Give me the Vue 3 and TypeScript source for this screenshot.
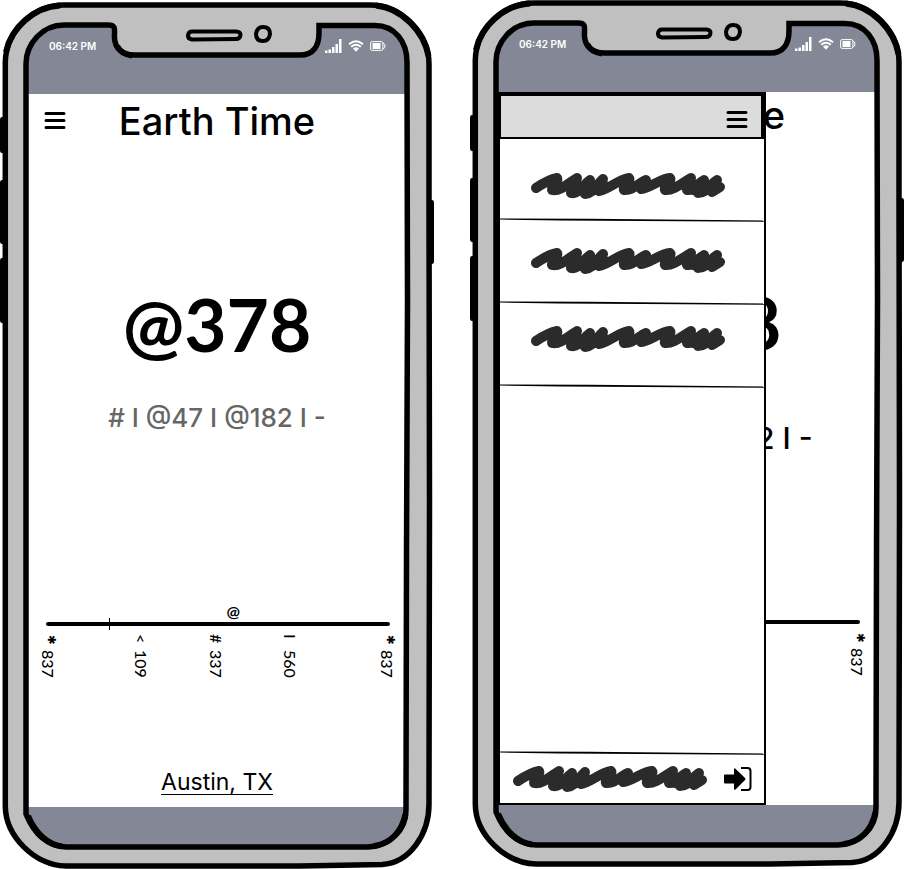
<script setup lang="ts">
interface Phone {
  id: string
  menuOpen: boolean
}

interface Mark {
  symbol: string
  value: string
  at: number
}

const phones: Phone[] = [
  { id: 'clock', menuOpen: false },
  { id: 'menu', menuOpen: true },
]

const marks: Mark[] = [
  { symbol: '*', value: '837', at: 0.5 },
  { symbol: '<', value: '109', at: 27.5 },
  { symbol: '#', value: '337', at: 49.5 },
  { symbol: 'I', value: '560', at: 71 },
  { symbol: '*', value: '837', at: 99 },
]

const sunrise = 18.4
const now = 54.4

const links = ['first', 'second', 'third']

const scribble =
  'M5 15C11 11 20 6 26 5C28 8 20 14 21 17C29 19 39 9 46 5L43 12 40 20C47 22 52 12 59 7L57 14 54 21C63 20 65 12 72 6L70 13 68 18C77 17 88 6 98 5C101 8 91 13 93 17C102 18 107 10 115 7L112 11 110 16C119 15 129 6 139 5C142 8 132 13 134 17C143 18 152 9 160 5L158 13 156 17C162 18 166 11 173 7L170 15 167 20C176 20 179 11 186 7L184 13 181 19 189 14M47 17L58 10 66 17 74 13M162 17L172 10 178 17'
</script>

<template>
  <main class="board">
    <article v-for="phone in phones" :key="phone.id" class="phone" :class="{ 'phone--menu': phone.menuOpen }">
      <div class="screen">
        <div class="status">
          <span class="status-time">06:42 PM</span>
          <div class="status-icons">
            <svg class="signal" viewBox="0 0 17 14" aria-hidden="true">
              <path d="M0 11.500h2.500V14H0zM3.500 10.500H6V14H3.500zM7 8h2.500v6H7zM10.500 5H13v9h-2.500zM14 0h2.500v14H14z" />
            </svg>
            <svg class="wifi" viewBox="0 0 16 12" aria-hidden="true">
              <path d="M1 4.200Q8-1.600 15 4.200M3.200 6.800Q8 2.800 12.800 6.800" />
              <path class="wifi-dot" d="M5 8.500Q8 6 11 8.500L8 11.800z" />
            </svg>
            <svg class="battery" viewBox="0 0 16 10" aria-hidden="true">
              <rect class="battery-shell" x=".6" y=".6" width="12.300" height="8.800" rx="1.500" />
              <path class="battery-shell" d="M13 2.300Q15 2.500 15 5T13 7.700" />
              <rect class="battery-charge" x="2.500" y="2" width="8" height="6" />
            </svg>
          </div>
        </div>

        <section class="content">
          <header class="top">
            <button class="icon-button" type="button" aria-label="Open menu">
              <svg class="burger" viewBox="0 0 22 18" aria-hidden="true">
                <path d="M2 1.500h18M2 8.500h18M2 15.500h18" />
              </svg>
            </button>
            <h1 class="title">Earth Time</h1>
          </header>

          <p class="clock">@378</p>
          <p class="next"># I @47 I @182 I -</p>

          <div class="timeline">
            <div class="track">
              <span class="tick" :style="{ left: sunrise + '%' }"></span>
              <span class="now" :style="{ left: now + '%' }">@</span>
              <span v-for="mark in marks" :key="mark.at" class="mark" :style="{ left: mark.at + '%' }">
                <span class="symbol" :class="{ 'symbol--star': mark.symbol === '*' }">{{ mark.symbol }}</span>
                <span>{{ mark.value }}</span>
              </span>
            </div>
          </div>

          <a class="place" href="#place">Austin, TX</a>

          <nav v-if="phone.menuOpen" class="drawer" aria-label="Menu">
            <div class="drawer-head">
              <button class="icon-button" type="button" aria-label="Close menu">
                <svg class="burger" viewBox="0 0 22 18" aria-hidden="true">
                  <path d="M2 1.500h18M2 8.500h18M2 15.500h18" />
                </svg>
              </button>
            </div>
            <a v-for="link in links" :key="link" href="#menu" class="entry" :class="'entry--' + link" :aria-label="link">
              <svg class="scribble" viewBox="0 0 195 26" aria-hidden="true"><path :d="scribble" /></svg>
              <svg class="rule" viewBox="0 0 266 4" preserveAspectRatio="none" aria-hidden="true">
                <path d="M0 .6L90 .8 266 2.600V3.800L60 2.600 0 1.600z" />
              </svg>
            </a>
            <div class="spacer">
              <svg class="rule" viewBox="0 0 266 4" preserveAspectRatio="none" aria-hidden="true">
                <path d="M0 .6L90 .8 266 2.600V3.800L60 2.600 0 1.600z" />
              </svg>
            </div>
            <a class="account" href="#leave" aria-label="Account">
              <svg class="scribble" viewBox="0 0 195 26" aria-hidden="true"><path :d="scribble" /></svg>
              <svg class="leave" viewBox="0 0 28 26" aria-hidden="true">
                <path d="M0 9.500Q0 8.500 1 8.500H10V3.500Q10 1.500 11.500 2.800L21 12Q22 13 21 14L11.500 23.500Q10 24.500 10 22.500V17.500H1Q0 17.500 0 16.500z" />
                <path class="leave-door" d="M17 2H23.500Q26.500 2 26.500 5V21Q26.500 24 23.500 24H17" />
              </svg>
            </a>
          </nav>
        </section>

        <div class="home"></div>
      </div>

      <svg class="frame" viewBox="0 0 434 867" preserveAspectRatio="none" aria-hidden="true">
        <path
          class="button-shape"
          d="M2 115H6V151H2Q0 151 0 148V118Q0 115 2 115zM2 178H6V242H2Q0 242 0 239V181Q0 178 2 178zM2 256H6V321H2Q0 321 0 318V259Q0 256 2 256zM429 198H432Q434 198 434 201V259Q434 262 432 262H429z"
        />
        <path
          class="shell"
          fill-rule="evenodd"
          d="M5.300 60C6 30 32 3 64 3H370C402 3 429 32 429 62V200L429.500 500 429 802C429 832 410 861 382 862.500L300 864H66C34 863 5.500 834 5.300 804z
             M26 62C26 42 42 23 64 23H108C117 23 114 28 114.500 36C115 46 122 53 134 53H300C314 53 319 43 319 31V23.500H375C395 23.500 407 40 407 60L407.500 300 406.500 550 406 808C406 828 390 844 368 845H66C44 844 33 829 26 812z"
        />
        <path class="weight" d="M6 50C11 26 34 5 60 3.500M376 3.500C402 6 424 30 428.500 54M28 814C35 831 48 843 62 844.500M405.500 812C402 830 390 842 374 844M117 44Q121 52 132 53.500" />
        <path class="speaker" d="M192 29.500H236Q241 30 240.500 33Q240 37 236 37L192 37.500Q188 37 188 33.500Q188.500 29.500 192 29.500z" />
        <path class="speaker" d="M263 25Q270 25 270 32Q269 39 263 39Q256 39 256 32Q257 25 263 25z" />
      </svg>
    </article>
  </main>
</template>

<style>
body {
  margin: 0;
  background: #fff;
}
</style>

<style scoped>
.board {
  display: grid;
  grid-template-columns: repeat(auto-fit, minmax(380px, 1fr));
  column-gap: 36px;
  align-items: start;
  color: #000;
  font-family: Lato, 'Open Sans', sans-serif;
}

.phone {
  position: relative;
  box-sizing: border-box;
  padding: 24px 28px 20px;
  margin-top: 2px;
}

.phone--menu {
  margin-top: 0;
}

.frame {
  position: absolute;
  inset: 0;
  width: 100%;
  height: 100%;
  pointer-events: none;
}

.shell {
  fill: #c0c0c0;
  stroke: #000;
  stroke-width: 5.5;
  stroke-linejoin: miter;
}

.weight {
  fill: none;
  stroke: #000;
  stroke-width: 6;
}

.speaker {
  fill: #c0c0c0;
  stroke: #000;
  stroke-width: 4;
}

.screen {
  display: flex;
  flex-direction: column;
}

.status {
  display: flex;
  justify-content: space-between;
  align-items: flex-start;
  box-sizing: border-box;
  height: 68px;
  padding: 13px 20px 0 21px;
  background: #848896;
  color: #fff;
}

.status-time {
  font-family: Inter, sans-serif;
  font-size: 10px;
  font-weight: 600;
  line-height: 14px;
}

.status-icons {
  display: flex;
  align-items: center;
  gap: 6px;
}

.signal {
  width: 17px;
  height: 14px;
  fill: #fff;
}

.wifi {
  width: 16px;
  height: 12px;
  fill: none;
  stroke: #fff;
  stroke-width: 2;
}

.wifi-dot {
  fill: #fff;
  stroke: none;
}

.battery {
  width: 16px;
  height: 10px;
}

.battery-shell {
  fill: none;
  stroke: #fff;
}

.battery-charge {
  fill: #fff;
}

.content {
  position: relative;
  display: flex;
  flex-direction: column;
  align-items: center;
  min-height: 713px;
  background: #fff;
}

.top {
  display: grid;
  grid-template-columns: 54px 1fr 54px;
  align-items: center;
  width: 100%;
  height: 54px;
}

.phone--menu .top {
  height: 46px;
}

.icon-button {
  display: flex;
  justify-content: center;
  padding: 0;
  border: 0;
  background: none;
}

.burger {
  width: 22px;
  height: 18px;
  fill: none;
  stroke: #000;
  stroke-width: 3;
  stroke-linecap: round;
}

.title {
  margin: 0;
  font-family: Inter, sans-serif;
  font-size: 38px;
  font-weight: 500;
  line-height: 46px;
  text-align: center;
}

.clock {
  margin: 136px 0 0;
  font-size: 73px;
  font-weight: 700;
  line-height: 80px;
}

.phone--menu .clock {
  margin-top: 144px;
}

.next {
  margin: 38px 0 0;
  color: #666;
  font-family: Inter, sans-serif;
  font-size: 26px;
  font-weight: 500;
  line-height: 32px;
}

.phone--menu .next {
  margin-top: 60px;
  color: #000;
  font-size: 30px;
}

.timeline {
  box-sizing: border-box;
  width: 100%;
  padding: 0 16px 0 18px;
  margin-top: auto;
}

.track {
  position: relative;
  height: 4px;
  border-radius: 2px;
  background: #000;
}

.tick {
  position: absolute;
  top: -4px;
  width: 1px;
  height: 12px;
  background: #000;
}

.now {
  position: absolute;
  bottom: 6px;
  font-size: 16px;
  font-weight: 700;
  line-height: 18px;
  transform: translateX(-50%);
}

.mark {
  position: absolute;
  top: 12px;
  display: flex;
  align-items: center;
  gap: 8px;
  font-size: 16px;
  font-weight: 500;
  line-height: 16px;
  writing-mode: vertical-rl;
  transform: translateX(-50%);
}

.symbol {
  height: 8px;
}

.symbol--star {
  font-family: Inter, sans-serif;
  font-size: 20px;
  font-weight: 800;
  line-height: 8px;
}

.place {
  margin: 144px 0 12px;
  border-bottom: 1px solid #000;
  color: inherit;
  font-family: Inter, sans-serif;
  font-size: 23px;
  line-height: 24px;
  text-decoration: none;
}

.drawer {
  position: absolute;
  top: 0;
  bottom: 0;
  left: 0;
  display: flex;
  flex-direction: column;
  box-sizing: border-box;
  width: 71%;
  border: 2px solid #000;
  background: #fff;
}

.drawer-head {
  display: flex;
  align-items: center;
  justify-content: flex-end;
  box-sizing: border-box;
  height: 45px;
  padding: 6px 13px 0 0;
  border: 2px solid #000;
  border-width: 2px 3px 2px 1px;
  background: #dcdcdc;
}

.entry {
  position: relative;
  box-sizing: border-box;
  height: 83px;
  padding-left: 31px;
}

.entry--first {
  padding-top: 34px;
}

.entry--second {
  padding-top: 26px;
}

.entry--third {
  padding-top: 21px;
}

.scribble {
  display: block;
  overflow: visible;
  width: 195px;
  height: 26px;
  fill: none;
  stroke: #2b2b2b;
  stroke-width: 10;
  stroke-linecap: round;
  stroke-linejoin: round;
}

.rule {
  position: absolute;
  bottom: 0;
  left: 0;
  width: 100%;
  height: 4px;
}

.spacer {
  position: relative;
  flex: 1;
}

.account {
  display: flex;
  align-items: center;
  justify-content: space-between;
  box-sizing: border-box;
  height: 48px;
  padding: 0 12px 0 13px;
}

.leave {
  width: 28px;
  height: 26px;
}

.leave-door {
  fill: none;
  stroke: #000;
  stroke-width: 2;
}

.home {
  height: 42px;
  background: #848896;
}
</style>
